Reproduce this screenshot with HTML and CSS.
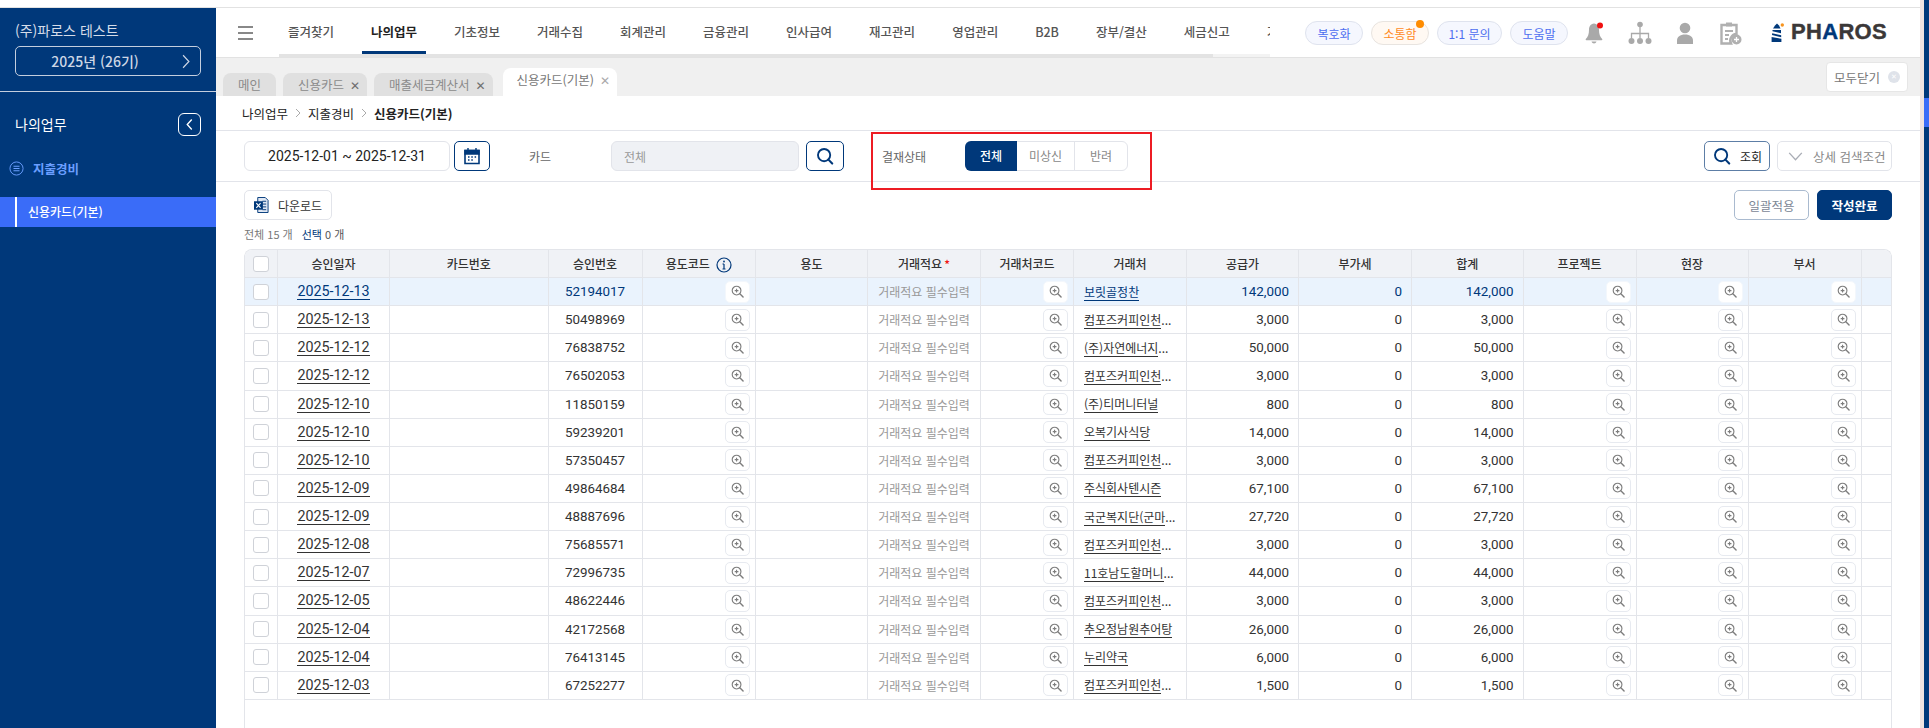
FILE: index.html
```html
<!DOCTYPE html>
<html lang="ko">
<head>
<meta charset="UTF-8">
<meta name="viewport" content="width=device-width, initial-scale=1.0">
<title>신용카드(기본)</title>
<link rel="stylesheet" href="styles.css">
</head>
<body>
<svg class="defs" width="0" height="0" aria-hidden="true">
    <symbol id="zoom" viewBox="0 0 14 14">
        <circle cx="6" cy="6" r="4.7" fill="none" stroke="currentColor" stroke-width="1.2"/>
        <path d="M9.5 9.5L13 13" stroke="currentColor" stroke-width="1.5" stroke-linecap="round"/>
        <path d="M6 4v4M4 6h4" stroke="currentColor" stroke-width="1.2"/>
    </symbol>
    <symbol id="search" viewBox="0 0 20 20">
        <circle cx="9" cy="9" r="6.8" fill="none" stroke="currentColor" stroke-width="2.1"/>
        <path d="M13.8 14L18 18.4" stroke="currentColor" stroke-width="2.3" stroke-linecap="round"/>
    </symbol>
</svg>

<div class="app">
    <div class="top-gap"></div>
    <div class="layout">
        <aside class="sidebar">
            <div class="company">(주)파로스 테스트</div>
            <button class="year-btn">
                <span>2025년 (26기)</span>
                <svg class="year-arrow" viewBox="0 0 10 18"><path d="M1.5 1.5L8.5 9L1.5 16.5" fill="none" stroke="currentColor" stroke-width="1.4"/></svg>
            </button>
            <div class="side-title">
                <span>나의업무</span>
                <button class="side-toggle"><svg viewBox="0 0 10 14" width="9" height="13"><path d="M7.5 1.5L2.5 7L7.5 12.5" fill="none" stroke="currentColor" stroke-width="1.5"/></svg></button>
            </div>
            <div class="side-group">
                <svg viewBox="0 0 16 16" width="15" height="15"><circle cx="8" cy="8" r="7" fill="none" stroke="currentColor" stroke-width="1"/><path d="M4.8 5.6h6.4M4.8 8h6.4M4.8 10.4h6.4" stroke="currentColor" stroke-width="1.2"/></svg>
                <span>지출경비</span>
            </div>
            <div class="side-item"><span>신용카드(기본)</span></div>
        </aside>

        <main class="main">
            <header class="header">
                <button class="burger"><span></span><span></span><span></span></button>
                <nav class="nav">
                    <div class="nav-items">
                        <a class="nav-item">즐겨찾기</a>
                        <a class="nav-item active">나의업무</a>
                        <a class="nav-item">기초정보</a>
                        <a class="nav-item">거래수집</a>
                        <a class="nav-item">회계관리</a>
                        <a class="nav-item">금융관리</a>
                        <a class="nav-item">인사급여</a>
                        <a class="nav-item">재고관리</a>
                        <a class="nav-item">영업관리</a>
                        <a class="nav-item">B2B</a>
                        <a class="nav-item">장부/결산</a>
                        <a class="nav-item">세금신고</a>
                        <a class="nav-item">거래명세</a>
                    </div>
                    <div class="nav-track"><div class="nav-thumb"></div></div>
                </nav>
                <div class="pills">
                    <button class="pill">복호화</button>
                    <button class="pill pill-orange">소통함<i class="pill-dot"></i></button>
                    <button class="pill pill-wide">1:1 문의</button>
                    <button class="pill">도움말</button>
                </div>
                <div class="head-icons">
                    <svg viewBox="0 0 24 24"><path d="M11 2.5c-3.4.4-5 3-5 6.2 0 4.5-1 7-3.2 9.3-.4.5-.1 1.2.6 1.2h15.2c.7 0 1-.7.6-1.2C17 15.7 16 13.2 16 8.7c0-3.2-1.6-5.8-5-6.2z" fill="#a9a9a9"/><path d="M8.5 20.5c.4 1.3 1.3 2 2.5 2s2.1-.7 2.5-2z" fill="#a9a9a9"/><circle cx="17" cy="4.5" r="3" fill="#f01010"/></svg>
                    <svg viewBox="0 0 24 24"><g fill="#a9a9a9"><circle cx="12" cy="3.5" r="2.8"/><circle cx="3.5" cy="20" r="3"/><circle cx="12" cy="20" r="3"/><circle cx="20.5" cy="20" r="3"/></g><path d="M12 6v11M3.5 17v-4.5h17V17" fill="none" stroke="#a9a9a9" stroke-width="1.3"/></svg>
                    <svg viewBox="0 0 24 24"><g fill="#a9a9a9"><circle cx="12" cy="7" r="5.3"/><path d="M4 23v-3.5c0-3.5 3-6 8-6s8 2.5 8 6V23z"/></g></svg>
                    <svg viewBox="0 0 24 24"><path d="M3.5 4h15v9a6.5 6.5 0 0 0-5.500 9.500H3.500z" fill="none" stroke="#b0b0b0" stroke-width="2.4"/><path d="M8 1.5h6v4H8z" fill="#b0b0b0"/><path d="M7 10h8M7 14h4M7 18h3" stroke="#b0b0b0" stroke-width="2"/><circle cx="18.5" cy="18.5" r="5" fill="#b0b0b0"/><path d="M18.5 16v5M16 18.5h5" stroke="#fff" stroke-width="1.3"/></svg>
                </div>
                <div class="logo">
                    <svg viewBox="0 0 13 19" width="13" height="19"><path d="M2 5.5L4 2.5 6 .5 8 2.500 9.500 5.500z" fill="#00387a"/><path d="M1.500 7h8.500v3.200L1.500 8.200zM1.200 10.200L10.200 12.200v2L1 12zM.6 14l9.800 1.800V19H.6z" fill="#00387a"/><circle cx="11.3" cy="2" r="1.7" fill="#f7941e"/></svg>
                    <span class="logo-text">PH<b>A</b>ROS</span>
                </div>
            </header>

            <div class="tabs">
                <div class="tab tab-home">메인</div>
                <div class="tab">신용카드<i class="tab-x">✕</i></div>
                <div class="tab">매출세금계산서<i class="tab-x">✕</i></div>
                <div class="tab tab-on">신용카드(기본)<i class="tab-x">✕</i></div>
                <button class="close-all">모두닫기<i class="close-dot">✕</i></button>
            </div>

            <div class="crumbs">
                <span>나의업무</span><svg viewBox="0 0 6 10" width="6" height="10"><path d="M1 1l4 4-4 4" fill="none" stroke="#aaa"/></svg>
                <span>지출경비</span><svg viewBox="0 0 6 10" width="6" height="10"><path d="M1 1l4 4-4 4" fill="none" stroke="#aaa"/></svg>
                <b>신용카드(기본)</b>
            </div>

            <div class="search-row">
                <div class="field date-field">2025-12-01 ~ 2025-12-31</div>
                <button class="icon-btn cal-btn"><svg viewBox="0 0 18 18" width="18" height="18"><path d="M2 3.5h14v13H2z" fill="none" stroke="#00387a" stroke-width="1.6"/><path d="M2 3.5h14V7H2zM5 1v3M13 1v3" fill="#00387a" stroke="#00387a" stroke-width="1.4"/><path d="M5 10h1.5M8.3 10h1.5M11.6 10h1.5M5 13h1.5M8.3 13h1.5" stroke="#00387a" stroke-width="1.5"/></svg></button>
                <span class="card-label">카드</span>
                <div class="field card-field">전체</div>
                <button class="icon-btn find-btn"><svg width="18" height="18"><use href="#search"/></svg></button>
                <span class="status-label">결재상태</span>
                <div class="seg">
                    <span class="seg-on">전체</span>
                    <span class="seg-mid">미상신</span>
                    <span class="seg-last">반려</span>
                </div>
                <div class="mark"></div>
                <div class="search-right">
                    <button class="query-btn"><svg width="18" height="18"><use href="#search"/></svg>조회</button>
                    <button class="detail-btn"><svg viewBox="0 0 16 10" width="15" height="9"><path d="M1 1l7 7.5L15 1" fill="none" stroke="#a9adb5" stroke-width="1.5"/></svg>상세 검색조건</button>
                </div>
            </div>

            <div class="toolbar">
                <button class="excel-btn"><svg viewBox="0 0 16 18" width="15" height="18"><path d="M4 1h8l3 3v13H4z" fill="#dfe7f3" stroke="#00387a" stroke-width="1"/><path d="M9 5h4M9 8h4M9 11h4M9 14h4" stroke="#00387a"/><path d="M0 5h9.5v9H0z" fill="#00387a"/><path d="M2.5 7L7 12M7 7l-4.5 5" stroke="#fff" stroke-width="1.2"/></svg>다운로드</button>
                <div class="toolbar-right">
                    <button class="apply-btn">일괄적용</button>
                    <button class="done-btn">작성완료</button>
                </div>
            </div>
            <div class="summary"><span>전체 15 개</span><span class="summary-sel"><em>선택</em> 0 개</span></div>

            <div class="table-wrap">
                <table class="grid">
                    <colgroup>
                        <col class="w-chk"><col class="w-date"><col class="w-card"><col class="w-no"><col class="w-code"><col class="w-use"><col class="w-memo"><col class="w-vcode"><col class="w-vendor"><col class="w-amt"><col class="w-vat"><col class="w-total"><col class="w-proj"><col class="w-site"><col class="w-dept"><col class="w-end">
                    </colgroup>
                    <thead>
                        <tr>
                            <th><i class="chk"></i></th><th>승인일자</th><th>카드번호</th><th>승인번호</th>
                            <th>용도코드<svg class="info" viewBox="0 0 16 16" width="16" height="16"><circle cx="8" cy="8" r="7" fill="none" stroke="#00387a" stroke-width="1.2"/><path d="M8 7v5M6.5 7H8M6.5 12h3" stroke="#00387a" stroke-width="1.2"/><circle cx="8" cy="4.5" r=".9" fill="#00387a"/></svg></th>
                            <th>용도</th><th>거래적요<i class="req">*</i></th><th>거래처코드</th><th>거래처</th><th>공급가</th><th>부가세</th><th>합계</th><th>프로젝트</th><th>현장</th><th>부서</th><th></th>
                        </tr>
                    </thead>
                    <tbody>
                        <tr class="row-on"><td><i class="chk"></i></td><td class="c"><a class="lnk">2025-12-13</a></td><td></td><td class="c">52194017</td><td class="b"><button class="zb"><svg><use href="#zoom"/></svg></button></td><td></td><td class="memo">거래적요 필수입력</td><td class="b"><button class="zb"><svg><use href="#zoom"/></svg></button></td><td class="name"><a class="lnk">보릿골정찬</a></td><td class="r">142,000</td><td class="r">0</td><td class="r">142,000</td><td class="b"><button class="zb"><svg><use href="#zoom"/></svg></button></td><td class="b"><button class="zb"><svg><use href="#zoom"/></svg></button></td><td class="b"><button class="zb"><svg><use href="#zoom"/></svg></button></td><td></td></tr>
                        <tr><td><i class="chk"></i></td><td class="c"><a class="lnk">2025-12-13</a></td><td></td><td class="c">50498969</td><td class="b"><button class="zb"><svg><use href="#zoom"/></svg></button></td><td></td><td class="memo">거래적요 필수입력</td><td class="b"><button class="zb"><svg><use href="#zoom"/></svg></button></td><td class="name"><a class="lnk">컴포즈커피인천</a>...</td><td class="r">3,000</td><td class="r">0</td><td class="r">3,000</td><td class="b"><button class="zb"><svg><use href="#zoom"/></svg></button></td><td class="b"><button class="zb"><svg><use href="#zoom"/></svg></button></td><td class="b"><button class="zb"><svg><use href="#zoom"/></svg></button></td><td></td></tr>
                        <tr><td><i class="chk"></i></td><td class="c"><a class="lnk">2025-12-12</a></td><td></td><td class="c">76838752</td><td class="b"><button class="zb"><svg><use href="#zoom"/></svg></button></td><td></td><td class="memo">거래적요 필수입력</td><td class="b"><button class="zb"><svg><use href="#zoom"/></svg></button></td><td class="name"><a class="lnk">(주)자연에너지</a>...</td><td class="r">50,000</td><td class="r">0</td><td class="r">50,000</td><td class="b"><button class="zb"><svg><use href="#zoom"/></svg></button></td><td class="b"><button class="zb"><svg><use href="#zoom"/></svg></button></td><td class="b"><button class="zb"><svg><use href="#zoom"/></svg></button></td><td></td></tr>
                        <tr><td><i class="chk"></i></td><td class="c"><a class="lnk">2025-12-12</a></td><td></td><td class="c">76502053</td><td class="b"><button class="zb"><svg><use href="#zoom"/></svg></button></td><td></td><td class="memo">거래적요 필수입력</td><td class="b"><button class="zb"><svg><use href="#zoom"/></svg></button></td><td class="name"><a class="lnk">컴포즈커피인천</a>...</td><td class="r">3,000</td><td class="r">0</td><td class="r">3,000</td><td class="b"><button class="zb"><svg><use href="#zoom"/></svg></button></td><td class="b"><button class="zb"><svg><use href="#zoom"/></svg></button></td><td class="b"><button class="zb"><svg><use href="#zoom"/></svg></button></td><td></td></tr>
                        <tr><td><i class="chk"></i></td><td class="c"><a class="lnk">2025-12-10</a></td><td></td><td class="c">11850159</td><td class="b"><button class="zb"><svg><use href="#zoom"/></svg></button></td><td></td><td class="memo">거래적요 필수입력</td><td class="b"><button class="zb"><svg><use href="#zoom"/></svg></button></td><td class="name"><a class="lnk">(주)티머니터널</a></td><td class="r">800</td><td class="r">0</td><td class="r">800</td><td class="b"><button class="zb"><svg><use href="#zoom"/></svg></button></td><td class="b"><button class="zb"><svg><use href="#zoom"/></svg></button></td><td class="b"><button class="zb"><svg><use href="#zoom"/></svg></button></td><td></td></tr>
                        <tr><td><i class="chk"></i></td><td class="c"><a class="lnk">2025-12-10</a></td><td></td><td class="c">59239201</td><td class="b"><button class="zb"><svg><use href="#zoom"/></svg></button></td><td></td><td class="memo">거래적요 필수입력</td><td class="b"><button class="zb"><svg><use href="#zoom"/></svg></button></td><td class="name"><a class="lnk">오복기사식당</a></td><td class="r">14,000</td><td class="r">0</td><td class="r">14,000</td><td class="b"><button class="zb"><svg><use href="#zoom"/></svg></button></td><td class="b"><button class="zb"><svg><use href="#zoom"/></svg></button></td><td class="b"><button class="zb"><svg><use href="#zoom"/></svg></button></td><td></td></tr>
                        <tr><td><i class="chk"></i></td><td class="c"><a class="lnk">2025-12-10</a></td><td></td><td class="c">57350457</td><td class="b"><button class="zb"><svg><use href="#zoom"/></svg></button></td><td></td><td class="memo">거래적요 필수입력</td><td class="b"><button class="zb"><svg><use href="#zoom"/></svg></button></td><td class="name"><a class="lnk">컴포즈커피인천</a>...</td><td class="r">3,000</td><td class="r">0</td><td class="r">3,000</td><td class="b"><button class="zb"><svg><use href="#zoom"/></svg></button></td><td class="b"><button class="zb"><svg><use href="#zoom"/></svg></button></td><td class="b"><button class="zb"><svg><use href="#zoom"/></svg></button></td><td></td></tr>
                        <tr><td><i class="chk"></i></td><td class="c"><a class="lnk">2025-12-09</a></td><td></td><td class="c">49864684</td><td class="b"><button class="zb"><svg><use href="#zoom"/></svg></button></td><td></td><td class="memo">거래적요 필수입력</td><td class="b"><button class="zb"><svg><use href="#zoom"/></svg></button></td><td class="name"><a class="lnk">주식회사텐시즌</a></td><td class="r">67,100</td><td class="r">0</td><td class="r">67,100</td><td class="b"><button class="zb"><svg><use href="#zoom"/></svg></button></td><td class="b"><button class="zb"><svg><use href="#zoom"/></svg></button></td><td class="b"><button class="zb"><svg><use href="#zoom"/></svg></button></td><td></td></tr>
                        <tr><td><i class="chk"></i></td><td class="c"><a class="lnk">2025-12-09</a></td><td></td><td class="c">48887696</td><td class="b"><button class="zb"><svg><use href="#zoom"/></svg></button></td><td></td><td class="memo">거래적요 필수입력</td><td class="b"><button class="zb"><svg><use href="#zoom"/></svg></button></td><td class="name"><a class="lnk">국군복지단(군마</a>...</td><td class="r">27,720</td><td class="r">0</td><td class="r">27,720</td><td class="b"><button class="zb"><svg><use href="#zoom"/></svg></button></td><td class="b"><button class="zb"><svg><use href="#zoom"/></svg></button></td><td class="b"><button class="zb"><svg><use href="#zoom"/></svg></button></td><td></td></tr>
                        <tr><td><i class="chk"></i></td><td class="c"><a class="lnk">2025-12-08</a></td><td></td><td class="c">75685571</td><td class="b"><button class="zb"><svg><use href="#zoom"/></svg></button></td><td></td><td class="memo">거래적요 필수입력</td><td class="b"><button class="zb"><svg><use href="#zoom"/></svg></button></td><td class="name"><a class="lnk">컴포즈커피인천</a>...</td><td class="r">3,000</td><td class="r">0</td><td class="r">3,000</td><td class="b"><button class="zb"><svg><use href="#zoom"/></svg></button></td><td class="b"><button class="zb"><svg><use href="#zoom"/></svg></button></td><td class="b"><button class="zb"><svg><use href="#zoom"/></svg></button></td><td></td></tr>
                        <tr><td><i class="chk"></i></td><td class="c"><a class="lnk">2025-12-07</a></td><td></td><td class="c">72996735</td><td class="b"><button class="zb"><svg><use href="#zoom"/></svg></button></td><td></td><td class="memo">거래적요 필수입력</td><td class="b"><button class="zb"><svg><use href="#zoom"/></svg></button></td><td class="name"><a class="lnk">11호남도할머니</a>...</td><td class="r">44,000</td><td class="r">0</td><td class="r">44,000</td><td class="b"><button class="zb"><svg><use href="#zoom"/></svg></button></td><td class="b"><button class="zb"><svg><use href="#zoom"/></svg></button></td><td class="b"><button class="zb"><svg><use href="#zoom"/></svg></button></td><td></td></tr>
                        <tr><td><i class="chk"></i></td><td class="c"><a class="lnk">2025-12-05</a></td><td></td><td class="c">48622446</td><td class="b"><button class="zb"><svg><use href="#zoom"/></svg></button></td><td></td><td class="memo">거래적요 필수입력</td><td class="b"><button class="zb"><svg><use href="#zoom"/></svg></button></td><td class="name"><a class="lnk">컴포즈커피인천</a>...</td><td class="r">3,000</td><td class="r">0</td><td class="r">3,000</td><td class="b"><button class="zb"><svg><use href="#zoom"/></svg></button></td><td class="b"><button class="zb"><svg><use href="#zoom"/></svg></button></td><td class="b"><button class="zb"><svg><use href="#zoom"/></svg></button></td><td></td></tr>
                        <tr><td><i class="chk"></i></td><td class="c"><a class="lnk">2025-12-04</a></td><td></td><td class="c">42172568</td><td class="b"><button class="zb"><svg><use href="#zoom"/></svg></button></td><td></td><td class="memo">거래적요 필수입력</td><td class="b"><button class="zb"><svg><use href="#zoom"/></svg></button></td><td class="name"><a class="lnk">추오정남원추어탕</a></td><td class="r">26,000</td><td class="r">0</td><td class="r">26,000</td><td class="b"><button class="zb"><svg><use href="#zoom"/></svg></button></td><td class="b"><button class="zb"><svg><use href="#zoom"/></svg></button></td><td class="b"><button class="zb"><svg><use href="#zoom"/></svg></button></td><td></td></tr>
                        <tr><td><i class="chk"></i></td><td class="c"><a class="lnk">2025-12-04</a></td><td></td><td class="c">76413145</td><td class="b"><button class="zb"><svg><use href="#zoom"/></svg></button></td><td></td><td class="memo">거래적요 필수입력</td><td class="b"><button class="zb"><svg><use href="#zoom"/></svg></button></td><td class="name"><a class="lnk">누리약국</a></td><td class="r">6,000</td><td class="r">0</td><td class="r">6,000</td><td class="b"><button class="zb"><svg><use href="#zoom"/></svg></button></td><td class="b"><button class="zb"><svg><use href="#zoom"/></svg></button></td><td class="b"><button class="zb"><svg><use href="#zoom"/></svg></button></td><td></td></tr>
                        <tr><td><i class="chk"></i></td><td class="c"><a class="lnk">2025-12-03</a></td><td></td><td class="c">67252277</td><td class="b"><button class="zb"><svg><use href="#zoom"/></svg></button></td><td></td><td class="memo">거래적요 필수입력</td><td class="b"><button class="zb"><svg><use href="#zoom"/></svg></button></td><td class="name"><a class="lnk">컴포즈커피인천</a>...</td><td class="r">1,500</td><td class="r">0</td><td class="r">1,500</td><td class="b"><button class="zb"><svg><use href="#zoom"/></svg></button></td><td class="b"><button class="zb"><svg><use href="#zoom"/></svg></button></td><td class="b"><button class="zb"><svg><use href="#zoom"/></svg></button></td><td></td></tr>
                    </tbody>
                </table>
            </div>
        </main>
    </div>
</div>
<div class="edge"><div class="edge-thumb"></div></div>
</body>
</html>
```

FILE: styles.css
```css
* {
    box-sizing: border-box;
}
html, body {
    height: 100%;
}
body {
    margin: 0;
    display: flex;
    overflow: hidden;
    background-color: #fff;
    color: #222;
    font-family: "Noto Sans CJK KR", "Noto Sans", sans-serif;
    font-size: 12px;
}
button {
    font-family: inherit;
    cursor: pointer;
}
i, em {
    font-style: normal;
}
.defs {
    position: absolute;
}
.app {
    flex: 1;
    min-width: 0;
    display: flex;
    flex-direction: column;
}
.top-gap {
    height: 8px;
    border-bottom: 1px solid #e2e2e2;
}
.layout {
    flex: 1;
    min-height: 0;
    display: flex;
}

/* right page edge */
.edge {
    width: 9px;
    border-left: 4px solid #efe3e1;
    background-color: #00387a;
}
.edge-thumb {
    height: 29px;
    margin-top: 98px;
    background-color: #3a6cf8;
}

/* sidebar */
.sidebar {
    width: 216px;
    flex-shrink: 0;
    background-color: #00387a;
    color: #fff;
}
.company {
    padding: 13px 15px 0;
    height: 38px;
    font-size: 14px;
    line-height: 18px;
    color: #d5dce8;
}
.year-btn {
    display: flex;
    align-items: center;
    width: 186px;
    height: 30px;
    margin-left: 15px;
    padding: 0 9px 0 19px;
    border: 1px solid #c4cede;
    border-radius: 5px;
    background: none;
    color: #ccd6e5;
    font-size: 14px;
    font-weight: 500;
}
.year-btn span {
    width: 120px;
    text-align: center;
    white-space: nowrap;
}
.year-arrow {
    width: 10px;
    height: 15px;
    margin-left: auto;
}
.side-title {
    display: flex;
    align-items: center;
    justify-content: space-between;
    height: 61px;
    margin-top: 15px;
    padding: 4px 15px 0;
    border-top: 1px solid #c4cede;
    font-size: 14px;
}
.side-toggle {
    display: flex;
    align-items: center;
    justify-content: center;
    width: 23px;
    height: 23px;
    padding: 0;
    border: 1.5px solid #fff;
    border-radius: 6px;
    background: none;
    color: #fff;
}
.side-group {
    display: flex;
    align-items: center;
    gap: 9px;
    height: 32px;
    padding-left: 9px;
    color: #6a9eff;
    font-size: 12.5px;
    font-weight: 700;
}
.side-item {
    height: 30px;
    margin-top: 13px;
    padding-left: 15px;
    background-color: #3a6cf8;
    font-weight: 500;
}
.side-item span {
    display: block;
    height: 30px;
    padding-left: 11px;
    border-left: 2px solid #fff;
    line-height: 30px;
}

/* main */
.main {
    position: relative;
    flex: 1;
    min-width: 0;
    display: flex;
    flex-direction: column;
}
.header {
    display: flex;
    align-items: flex-start;
    height: 50px;
    border-bottom: 1px solid #e2e2e2;
}
.burger {
    display: flex;
    flex-direction: column;
    gap: 4px;
    width: 15px;
    margin: 18px 0 0 22px;
    padding: 0;
    border: none;
    background: none;
}
.burger span {
    height: 2px;
    background-color: #888;
}
.nav {
    width: 991px;
    margin-left: 26px;
    overflow: hidden;
}
.nav-items {
    display: flex;
    gap: 19px;
    height: 46px;
    white-space: nowrap;
}
.nav-item {
    flex-shrink: 0;
    padding: 0 9px;
    border-bottom: 3px solid transparent;
    color: #555;
    font-size: 12.5px;
    font-weight: 500;
    line-height: 47px;
}
.nav-item.active {
    border-bottom-color: #00387a;
    color: #222;
    font-weight: 700;
}
.nav-track {
    height: 3px;
    background-color: #f3f3f3;
}
.nav-thumb {
    width: 934px;
    height: 3px;
    background-color: #e3e3e3;
}
.pills {
    display: flex;
    gap: 8px;
    margin: 13px 0 0 35px;
}
.pill {
    position: relative;
    width: 58px;
    height: 24px;
    padding: 0;
    border: 1px solid #dfe3ee;
    border-radius: 12px;
    background-color: #f5f7fe;
    color: #4d6ef0;
    font-size: 12px;
}
.pill-wide {
    width: 65px;
}
.pill-orange {
    background-color: #fff9f3;
    border-color: #e8e4e0;
    color: #ff8a1e;
}
.pill-dot {
    position: absolute;
    top: -2px;
    right: 4px;
    width: 8px;
    height: 8px;
    border-radius: 50%;
    background-color: #ff8c00;
}
.head-icons {
    display: flex;
    gap: 21px;
    margin: 13px 0 0 15px;
}
.head-icons svg {
    width: 24px;
    height: 24px;
}
.logo {
    display: flex;
    align-items: center;
    gap: 7px;
    margin: 14px 0 0 29px;
}
.logo-text {
    color: #3b3838;
    font-family: "Liberation Sans", sans-serif;
    font-size: 22px;
    font-weight: 700;
    letter-spacing: .3px;
    line-height: 20px;
    -webkit-text-stroke: .4px currentColor;
}
.logo-text b {
    color: #00387a;
}

/* tabs */
.tabs {
    display: flex;
    align-items: flex-end;
    gap: 7px;
    height: 38px;
    padding-left: 7px;
    background-color: #f0f0f0;
}
.tab {
    height: 23px;
    padding: 0 8px 0 15px;
    border-radius: 8px 8px 0 0;
    background-color: #e0e0e0;
    color: #8a8a8a;
    font-size: 12.5px;
    line-height: 23px;
    white-space: nowrap;
}
.tab-home {
    padding: 0 15px;
}
.tab-x {
    display: inline-block;
    width: 9px;
    margin-left: 6px;
    color: #6e6e6e;
    font-family: "DejaVu Sans", sans-serif;
    font-size: 12px;
    font-weight: 700;
    line-height: 12px;
}
.tab-on {
    height: 28px;
    margin-left: 3px;
    padding: 0 8px 0 14px;
    background-color: #fff;
    color: #777;
    line-height: 24px;
}
.tab-on .tab-x {
    color: #aaa;
}
.close-all {
    display: flex;
    align-items: center;
    gap: 8px;
    width: 82px;
    height: 30px;
    margin: 0 12px 4px auto;
    padding: 0 0 0 7px;
    border: 1px solid #e6e6e6;
    border-radius: 4px;
    background-color: #fff;
    color: #777;
    font-size: 12.5px;
    white-space: nowrap;
}
.close-dot {
    display: flex;
    align-items: center;
    justify-content: center;
    width: 12px;
    height: 12px;
    border-radius: 50%;
    background-color: #dfe3ea;
    color: #fff;
    font-family: "DejaVu Sans", sans-serif;
    font-size: 7px;
}

/* breadcrumb */
.crumbs {
    display: flex;
    align-items: center;
    gap: 7px;
    height: 35px;
    padding-left: 26px;
    border-bottom: 1px solid #e2e4ea;
    color: #222;
    font-size: 12.5px;
}

/* search row */
.search-row {
    position: relative;
    display: flex;
    align-items: center;
    height: 51px;
    padding: 0 28px;
    border-bottom: 1px solid #e2e4ea;
}
.field {
    display: flex;
    align-items: center;
    height: 30px;
    border: 1px solid #e2e4ea;
    border-radius: 6px;
}
.date-field {
    width: 206px;
    justify-content: center;
    font-family: Roboto, sans-serif;
    font-size: 14px;
}
.icon-btn {
    display: flex;
    align-items: center;
    justify-content: center;
    height: 30px;
    padding: 0;
    border: 1px solid #00387a;
    border-radius: 5px;
    background-color: #fff;
    color: #00387a;
}
.cal-btn {
    width: 36px;
    margin-left: 4px;
}
.card-label {
    width: 121px;
    padding-left: 39px;
    color: #666;
}
.card-field {
    width: 188px;
    padding-left: 12px;
    background-color: #eff1f5;
    color: #999;
}
.find-btn {
    width: 38px;
    margin-left: 7px;
}
.status-label {
    width: 83px;
    margin-left: 38px;
    color: #666;
    font-size: 12px;
}
.seg {
    display: flex;
    width: 163px;
    height: 30px;
    border: 1px solid #e2e4ea;
    border-radius: 6px;
    color: #888;
    line-height: 28px;
    text-align: center;
}
.seg-on {
    width: 52px;
    margin: -1px 0 -1px -1px;
    border-radius: 6px 0 0 6px;
    background-color: #00387a;
    color: #fff;
    font-weight: 500;
    line-height: 30px;
}
.seg-mid {
    width: 58px;
    border-right: 1px solid #e2e4ea;
}
.seg-last {
    flex: 1;
}
/* red annotation box drawn over the screenshot */
.mark {
    position: absolute;
    left: 655px;
    top: 1px;
    width: 281px;
    height: 58px;
    border: 2px solid #ed1c24;
}
.search-right {
    display: flex;
    gap: 7px;
    margin-left: auto;
}
.query-btn {
    display: flex;
    align-items: center;
    gap: 9px;
    width: 66px;
    height: 30px;
    padding: 0 0 0 8px;
    border: 1px solid #5d7ea6;
    border-radius: 5px;
    background-color: #fff;
    color: #222;
    font-size: 12px;
}
.query-btn svg {
    color: #00387a;
}
.detail-btn {
    display: flex;
    align-items: center;
    gap: 10px;
    width: 115px;
    height: 30px;
    padding: 0 0 0 10px;
    border: 1px solid #e2e4ea;
    border-radius: 5px;
    background-color: #fff;
    color: #888;
    font-size: 12.5px;
    white-space: nowrap;
}

/* toolbar */
.toolbar {
    display: flex;
    justify-content: space-between;
    height: 38px;
    padding: 8px 28px 0;
}
.excel-btn {
    display: flex;
    align-items: center;
    gap: 9px;
    width: 88px;
    height: 30px;
    padding: 0 0 0 9px;
    border: 1px solid #e2e4ea;
    border-radius: 5px;
    background-color: #fff;
    color: #333;
    font-size: 12px;
}
.toolbar-right {
    display: flex;
    gap: 8px;
}
.apply-btn, .done-btn {
    width: 75px;
    height: 30px;
    padding: 0;
    border: 1px solid #a9bacf;
    border-radius: 5px;
    background-color: #fff;
    color: #7c8796;
    font-size: 12.5px;
}
.done-btn {
    border-color: #00387a;
    background-color: #00387a;
    color: #fff;
    font-weight: 700;
}
.summary {
    display: flex;
    gap: 9px;
    height: 29px;
    padding: 6px 0 0 28px;
    color: #777;
    font-size: 11px;
    line-height: 16px;
}
.summary-sel {
    color: #555;
}
.summary-sel em {
    color: #00387a;
}

/* table */
.table-wrap {
    flex: 1;
    min-height: 0;
    margin: 0 28px;
    border: 1px solid #e3e5ea;
    border-bottom: none;
    border-radius: 8px 8px 0 0;
    overflow: hidden;
}
.grid {
    width: 100%;
    table-layout: fixed;
    border-collapse: separate;
    border-spacing: 0;
}
.w-chk { width: 33px; }
.w-date { width: 112px; }
.w-card { width: 158.5px; }
.w-no { width: 94px; }
.w-code { width: 113.5px; }
.w-use { width: 112px; }
.w-memo { width: 113px; }
.w-vcode { width: 93px; }
.w-vendor { width: 113px; }
.w-amt { width: 112px; }
.w-vat { width: 113px; }
.w-total { width: 111.5px; }
.w-proj { width: 113px; }
.w-site { width: 112px; }
.w-dept { width: 113px; }
.grid th {
    height: 28px;
    padding: 0;
    border-right: 1px solid #e3e5ea;
    border-bottom: 1px solid #e3e5ea;
    background-color: #f0f2f6;
    color: #333;
    font-size: 12px;
    font-weight: 500;
    text-align: center;
}
.grid td {
    height: 28.13px;
    padding: 0;
    border-right: 1px solid #e3e5ea;
    border-bottom: 1px solid #e3e5ea;
    color: #333;
    font-family: Roboto, "Noto Sans CJK KR", sans-serif;
    font-size: 13.4px;
    white-space: nowrap;
    overflow: hidden;
}
.grid th:last-child, .grid td:last-child {
    border-right: none;
}
.grid .row-on td {
    background-color: #eaf3fd;
    color: #00387a;
}
.chk {
    display: block;
    width: 16px;
    height: 16px;
    margin: 0 auto;
    border: 1px solid #cfd2d8;
    border-radius: 3px;
    background-color: #fff;
}
.c {
    text-align: center;
}
.grid td.r {
    padding-right: 9px;
    text-align: right;
}
.grid td.b {
    padding-right: 5px;
}
.lnk {
    display: inline-block;
    border-bottom: 1px solid currentColor;
    line-height: 16px;
}
.grid td.c .lnk {
    font-size: 14.3px;
}
.grid td.memo, .grid .row-on td.memo {
    color: #999;
    font-family: "Noto Sans CJK KR", sans-serif;
    font-size: 12px;
    text-align: center;
}
.grid td.name {
    padding-left: 10px;
    font-family: "Noto Sans CJK KR", sans-serif;
    font-size: 12px;
}
.zb {
    display: flex;
    align-items: center;
    justify-content: center;
    width: 25px;
    height: 22px;
    margin-left: auto;
    padding: 0;
    border: 1px solid #e7eaf0;
    border-radius: 5px;
    background-color: #fff;
    color: #7d7d7d;
}
.row-on .zb {
    border-color: #f3f7fc;
}
.zb svg {
    width: 13px;
    height: 13px;
}
.info {
    margin-left: 6px;
    vertical-align: -4px;
}
.req {
    margin-left: 2px;
    color: #f01010;
}
```
